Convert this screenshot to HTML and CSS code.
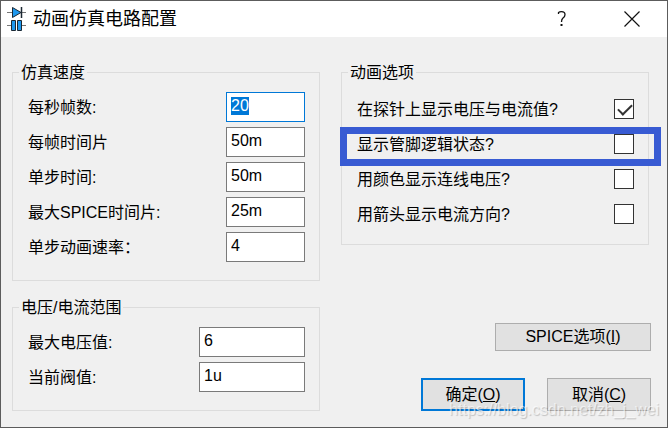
FILE: index.html
```html
<!DOCTYPE html>
<html lang="zh-CN">
  <head>
    <title>动画仿真电路配置</title>
    <meta charset="utf-8">
    <link rel="stylesheet" href="styles.css">
  </head>
  <body>

  <form class="dialog">
    <header class="titlebar">
      <svg class="app-icon" width="20" height="26" viewBox="0 0 20 26">
        <path d="M0 6.5H19M0 19.5H5M15 19.5H19" stroke="#777" stroke-width="1" fill="none"/>
        <path d="M5.5 1.5V11.5L14 6.5Z" fill="#1e98ee" stroke="#1c2833"/>
        <path d="M14.5 1V12" stroke="#1c2833" stroke-width="1.5"/>
        <path d="M4.5 14.5V24.5H8.5V14.5ZM10.5 14.5V24.5H14.5V14.5Z" fill="#1e98ee" stroke="#1c2833"/>
      </svg>
      <h1 class="title">动画仿真电路配置</h1>
      <button type="button" class="caption-btn" aria-label="帮助">
        <svg width="10" height="16" viewBox="0 0 10 16">
          <path d="M1.5 3V1.5Q2.5 0.7 4.5 0.7Q8 0.7 8 3.7Q8 5.5 6 7Q4.5 8.2 4.5 11" fill="none" stroke="#111" stroke-width="1.3"/>
          <path d="M3.5 13H5.5V15H3.5Z" fill="#111"/>
        </svg>
      </button>
      <button type="button" class="caption-btn" aria-label="关闭">
        <svg width="16" height="16" viewBox="0 0 16 16">
          <path d="M0.5 0.5L15.5 15.5M15.5 0.5L0.5 15.5" stroke="#111" stroke-width="1.2"/>
        </svg>
      </button>
    </header>

    <div class="content">
      <div class="column">
        <fieldset class="group">
          <legend>仿真速度</legend>
          <div class="row"><label for="fps">每秒帧数:</label><input class="field" type="text" id="fps" value="20"></div>
          <div class="row"><label for="frame">每帧时间片</label><input class="field" type="text" id="frame" value="50m"></div>
          <div class="row"><label for="step">单步时间:</label><input class="field" type="text" id="step" value="50m"></div>
          <div class="row"><label for="spice">最大SPICE时间片:</label><input class="field" type="text" id="spice" value="25m"></div>
          <div class="row"><label for="rate">单步动画速率：</label><input class="field" type="text" id="rate" value="4"></div>
        </fieldset>

        <fieldset class="group">
          <legend>电压/电流范围</legend>
          <div class="row"><label for="volt">最大电压值:</label><input class="field wide" type="text" id="volt" value="6"></div>
          <div class="row"><label for="amp">当前阀值:</label><input class="field wide" type="text" id="amp" value="1u"></div>
        </fieldset>
      </div>

      <div class="column">
        <fieldset class="group options">
          <legend>动画选项</legend>
          <div class="row"><label for="probes">在探针上显示电压与电流值?</label><input class="check" type="checkbox" id="probes" checked></div>
          <div class="row marked"><label for="pins">显示管脚逻辑状态?</label><input class="check" type="checkbox" id="pins"></div>
          <div class="row"><label for="colour">用颜色显示连线电压?</label><input class="check" type="checkbox" id="colour"></div>
          <div class="row"><label for="arrows">用箭头显示电流方向?</label><input class="check" type="checkbox" id="arrows"></div>
        </fieldset>

        <div class="buttons">
          <button type="button" class="btn spice">SPICE选项(<u>I</u>)</button>
          <div class="actions">
            <button type="submit" class="btn primary">确定(<u>O</u>)</button>
            <button type="button" class="btn">取消(<u>C</u>)</button>
          </div>
        </div>
      </div>
    </div>
  </form>

  <div class="watermark">https://blog.csdn.net/zh_j_wei</div>

  <script src="main.js"></script>
  </body>
</html>
```
FILE: styles.css
```css
* {
  box-sizing: border-box;
}
body {
  margin: 0;
  position: relative;
  color: #000;
  font-family: "Liberation Sans", "Noto Sans CJK SC", sans-serif;
  font-size: 16px;
  line-height: 20px;
}

.dialog {
  min-height: 100vh;
  display: flex;
  flex-direction: column;
  background: #f0f0f0;
  border: 1px solid #5c5c5c;
}

/* title bar */
.titlebar {
  display: flex;
  align-items: center;
  height: 36px;
  padding-left: 6px;
  background: #fff;
}
.app-icon {
  margin-right: 6px;
}
.title {
  flex: 1;
  margin: 0;
  font-size: 18px;
  font-weight: normal;
}
.caption-btn {
  display: flex;
  align-items: center;
  justify-content: center;
  width: 70px;
  height: 36px;
  padding: 0;
  border: 0;
  background: none;
}

.content {
  flex: 1;
  display: grid;
  grid-template-columns: 1fr 1fr;
  gap: 21px;
  padding: 25px 18px 16px 11px;
}
.column {
  display: flex;
  flex-direction: column;
  gap: 16px;
}

/* group boxes */
.group {
  display: flex;
  flex-direction: column;
  gap: 5px;
  min-width: 0;
  margin: 0;
  padding: 10px 14px 18px 15px;
  border: 1px solid #dcdcdc;
}
.group legend {
  height: 20px;
  margin-left: -9px;
  padding: 0 2px;
  line-height: 22px;
}
.options {
  padding-top: 12px;
  padding-bottom: 15px;
}
.row {
  position: relative;
  display: flex;
  align-items: center;
  justify-content: space-between;
  height: 30px;
}
.row label {
  padding-top: 2px;
}

.field {
  width: 79px;
  height: 30px;
  padding: 0 4px 2px;
  border: 1px solid #7a7a7a;
  border-radius: 0;
  background: #fff;
  color: #000;
  font: inherit;
}
.field.wide {
  width: 106px;
}
.field:focus {
  outline: none;
  border-color: #0078d7;
}
.field::selection {
  background: #0078d7;
  color: #fff;
}

.check {
  appearance: none;
  width: 20px;
  height: 20px;
  margin: 0;
  border: 1px solid #333;
  background: #fff;
}
.check:checked::before {
  content: "";
  display: block;
  width: 6px;
  height: 12px;
  margin: 1px 0 0 6px;
  border: solid #333;
  border-width: 0 2px 2px 0;
  transform: rotate(45deg);
}

/* highlighted option */
.marked::after {
  content: "";
  position: absolute;
  top: -2px;
  right: -27px;
  bottom: -7px;
  left: -17px;
  border: 7px solid #385bd3;
  pointer-events: none;
}

/* buttons */
.buttons {
  flex: 1;
  display: flex;
  flex-direction: column;
  align-items: flex-end;
  justify-content: flex-end;
  gap: 27px;
  margin-right: -2px;
}
.actions {
  display: flex;
  gap: 22px;
}
.btn {
  width: 104px;
  height: 33px;
  padding: 0;
  border: 1px solid #adadad;
  background: #e1e1e1;
  color: #000;
  font: inherit;
}
.btn.spice {
  width: 156px;
  height: 28px;
}
.btn.primary {
  border: 2px solid #0078d7;
}

.watermark {
  position: absolute;
  right: 9px;
  bottom: 8px;
  color: rgba(255, 255, 255, 0.6);
  text-shadow: 1px 1px 1px rgba(0, 0, 0, 0.2);
  pointer-events: none;
}
```
FILE: main.js
```js
// the first field is ready to be typed over
var fps = document.getElementById('fps');
fps.focus();
fps.select();
```
